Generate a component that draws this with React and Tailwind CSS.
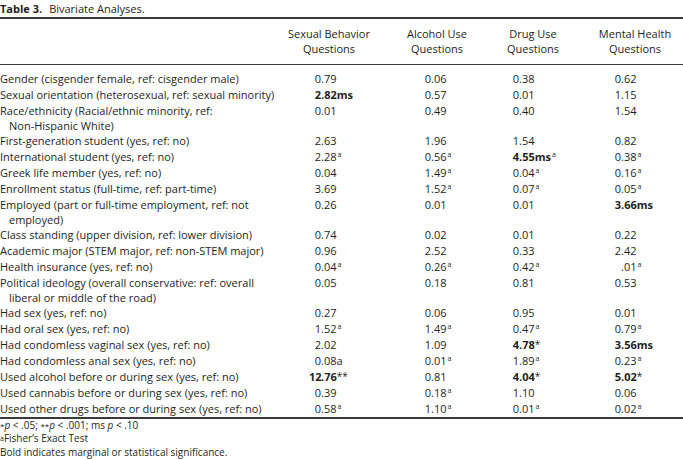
import React from "react";

const rows = [
  { l: ["Gender (cisgender female, ref: cisgender male)"], v: ["0.79", "0.06", "0.38", "0.62"] },
  { l: ["Sexual orientation (heterosexual, ref: sexual minority)"], v: ["2.82|ms|b", "0.57", "0.01", "1.15"] },
  { l: ["Race/ethnicity (Racial/ethnic minority, ref:", "Non-Hispanic White)"], v: ["0.01", "0.49", "0.40", "1.54"] },
  { l: ["First-generation student (yes, ref: no)"], v: ["2.63", "1.96", "1.54", "0.82"] },
  { l: ["International student (yes, ref: no)"], v: ["2.28|a", "0.56|a", "4.55|ms|b|a", "0.38|a"] },
  { l: ["Greek life member (yes, ref: no)"], v: ["0.04", "1.49|a", "0.04|a", "0.16|a"] },
  { l: ["Enrollment status (full-time, ref: part-time)"], v: ["3.69", "1.52|a", "0.07|a", "0.05|a"] },
  { l: ["Employed (part or full-time employment, ref: not", "employed)"], v: ["0.26", "0.01", "0.01", "3.66|ms|b"] },
  { l: ["Class standing (upper division, ref: lower division)"], v: ["0.74", "0.02", "0.01", "0.22"] },
  { l: ["Academic major (STEM major, ref: non-STEM major)"], v: ["0.96", "2.52", "0.33", "2.42"] },
  { l: ["Health insurance (yes, ref: no)"], v: ["0.04|a", "0.26|a", "0.42|a", ".01|a"] },
  { l: ["Political ideology (overall conservative: ref: overall", "liberal or middle of the road)"], v: ["0.05", "0.18", "0.81", "0.53"] },
  { l: ["Had sex (yes, ref: no)"], v: ["0.27", "0.06", "0.95", "0.01"] },
  { l: ["Had oral sex (yes, ref: no)"], v: ["1.52|a", "1.49|a", "0.47|a", "0.79|a"] },
  { l: ["Had condomless vaginal sex (yes, ref: no)"], v: ["2.02", "1.09", "4.78|*|b", "3.56|ms|b"] },
  { l: ["Had condomless anal sex (yes, ref: no)"], v: ["0.08a", "0.01|a", "1.89|a", "0.23|a"] },
  { l: ["Used alcohol before or during sex (yes, ref: no)"], v: ["12.76|**|b", "0.81", "4.04|*|b", "5.02|*|b"] },
  { l: ["Used cannabis before or during sex (yes, ref: no)"], v: ["0.39", "0.18|a", "1.10", "0.06"] },
  { l: ["Used other drugs before or during sex (yes, ref: no)"], v: ["0.58|a", "1.10|a", "0.01|a", "0.02|a"] },
];

const pads = ["pl-[46px]", "pl-[24px]", "pl-[28px]", "pl-[22px]"];

function Val({ s, col }) {
  const parts = s.split("|");
  const num = parts[0];
  const bold = parts.includes("b");
  const sup = parts.includes("a");
  const ms = parts.includes("ms");
  const star = parts.find((p) => p === "*" || p === "**");
  const dot = num.indexOf(".");
  const intPart = num.slice(0, dot);
  const rest = num.slice(dot);
  return (
    <div className={`flex items-start leading-[16px] ${pads[col]}`}>
      <span className={`w-[12px] shrink-0 text-right ${bold ? "font-bold" : ""}`}>{intPart}</span>
      <span className={bold ? "font-bold" : ""}>
        {rest}
        {ms ? "ms" : ""}
      </span>
      {star ? <span className="text-[10px] leading-[15px]">{star}</span> : null}
      {sup ? <span className="text-[7px] leading-[11px] ml-[1px]">a</span> : null}
    </div>
  );
}

export default function App() {
  return (
    <div
      className="w-[683px] h-[459px] bg-white text-[#231f20] overflow-hidden"
      style={{ fontFamily: "'Open Sans', Lato, sans-serif" }}
    >
      <div className="text-[11px] leading-[17px] flex">
        <span className="font-bold">Table 3.</span>
        <span className="ml-[7px]">Bivariate Analyses.</span>
      </div>
      <div className="border-t-2 border-[#3a3a3a]" />
      <div className="grid grid-cols-[263px_132px_84px_108px_96px] text-[11px] leading-[15px] pt-[7px] pb-[8px] border-b border-[#3a3a3a]">
        <div />
        <div className="text-center">Sexual Behavior<br />Questions</div>
        <div className="text-center">Alcohol Use<br />Questions</div>
        <div className="text-center">Drug Use<br />Questions</div>
        <div className="text-center">Mental Health<br />Questions</div>
      </div>
      <div className="pt-[6px] border-b-2 border-[#3a3a3a] text-[11px]">
        {rows.map((r, i) => (
          <div key={i} className="grid grid-cols-[263px_132px_84px_108px_96px]">
            <div>
              <div className="leading-[16px] whitespace-nowrap">{r.l[0]}</div>
              {r.l[1] ? <div className="leading-[14px] pl-[9px] whitespace-nowrap">{r.l[1]}</div> : null}
            </div>
            {r.v.map((v, j) => (
              <Val key={j} s={v} col={j} />
            ))}
          </div>
        ))}
      </div>
      <div className="text-[10px] leading-[13.4px]">
        <div>
          <span className="text-[8px] align-top">*</span>
          <span className="italic">p</span> &lt; .05;{" "}
          <span className="text-[8px] align-top">**</span>
          <span className="italic">p</span> &lt; .001; ms <span className="italic">p</span> &lt; .10
        </div>
        <div>
          <span className="text-[7px] align-top">a</span>Fisher’s Exact Test
        </div>
        <div>Bold indicates marginal or statistical significance.</div>
      </div>
    </div>
  );
}
